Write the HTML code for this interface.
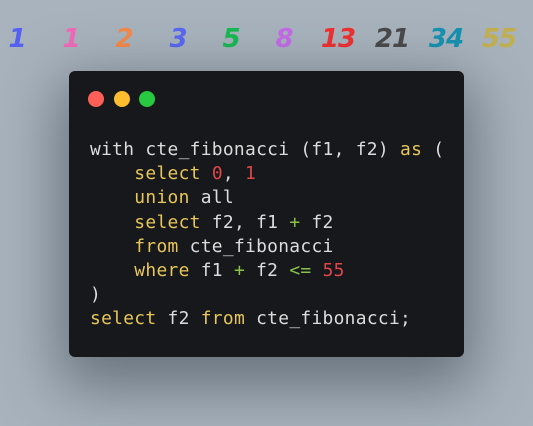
<!DOCTYPE html>
<html><head><style>
html,body{margin:0;padding:0}
body{width:533px;height:426px;background:#a8b3bd;position:relative;overflow:hidden;font-family:"Liberation Sans",sans-serif}
.n{position:absolute;top:24px;font-weight:bold;font-style:italic;font-size:26px;line-height:30px;transform:translateX(-50%);letter-spacing:-1px;font-family:"DejaVu Sans","Liberation Sans",sans-serif}
.win{position:absolute;left:69px;top:71px;width:395px;height:286px;background:#16181b;border-radius:6px;box-shadow:0 20px 60px 10px rgba(40,50,60,.5)}
.d{position:absolute;top:91px;width:16px;height:16px;border-radius:50%}
pre{position:absolute;left:90px;top:138px;margin:0;font-family:"DejaVu Sans Mono","Liberation Mono",monospace;font-size:17.9px;letter-spacing:0.3px;line-height:24.2px;color:#dcdcdc}
.k{color:#e8c65a}.r{color:#e0464a}.g{color:#8bc34a}
</style></head><body>
<div class="n" style="left:17px;color:#5561f0">1</div>
<div class="n" style="left:71px;color:#f26ab8">1</div>
<div class="n" style="left:124px;color:#f58a4a">2</div>
<div class="n" style="left:178px;color:#5968f2">3</div>
<div class="n" style="left:231px;color:#16bb50">5</div>
<div class="n" style="left:284px;color:#c56be8">8</div>
<div class="n" style="left:338px;color:#f03030">13</div>
<div class="n" style="left:392px;color:#4a4a4a">21</div>
<div class="n" style="left:446px;color:#1692b0">34</div>
<div class="n" style="left:499px;color:#c2b050">55</div>
<div class="win"></div>
<div class="d" style="left:88px;background:#fe5f57"></div>
<div class="d" style="left:114px;background:#febc2e"></div>
<div class="d" style="left:139px;background:#28c840"></div>
<pre>with cte_fibonacci (f1, f2) <span class="k">as</span> (
    <span class="k">select</span> <span class="r">0</span>, <span class="r">1</span>
    <span class="k">union</span> all
    <span class="k">select</span> f2, f1 <span class="g">+</span> f2
    <span class="k">from</span> cte_fibonacci
    <span class="k">where</span> f1 <span class="g">+</span> f2 <span class="g">&lt;=</span> <span class="r">55</span>
)
<span class="k">select</span> f2 <span class="k">from</span> cte_fibonacci;</pre>
</body></html>
